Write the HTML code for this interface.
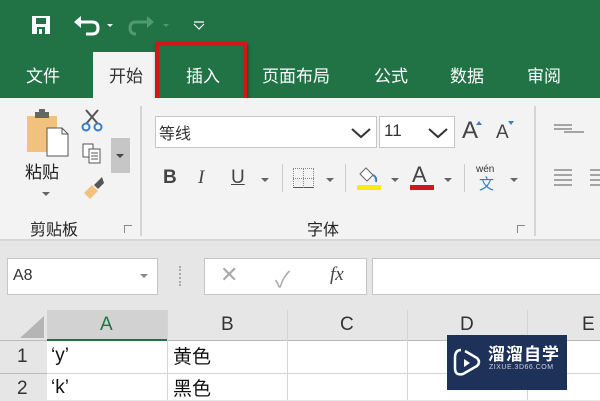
<!DOCTYPE html><html><head><meta charset="utf-8"><style>
*{margin:0;padding:0;box-sizing:border-box}
body{width:600px;height:400px;overflow:hidden;position:relative;background:#e6e6e6;font-family:"Liberation Sans","Noto Sans CJK SC",sans-serif}
.a{position:absolute}
.tab{position:absolute;top:62px;color:#fff;font-size:17px}
.cjk{font-family:"Noto Sans CJK SC",sans-serif}
.dd{position:absolute;width:0;height:0;border-left:4px solid transparent;border-right:4px solid transparent;border-top:4px solid #666}
</style></head><body>
<div class="a" style="left:0;top:0;width:600px;height:98px;background:#217346"></div>
<!-- QAT -->
<svg class="a" style="left:30px;top:14px" width="180" height="24" viewBox="0 0 180 24">
<rect x="2" y="2" width="18" height="18" fill="#fff"/><rect x="6" y="4" width="10" height="6" fill="#217346"/><rect x="7" y="13" width="8" height="7" fill="#217346"/><rect x="9" y="15" width="3" height="5" fill="#fff"/>
<path d="M50 8 L62 8 Q68 8 68 14 Q68 20 62 20 L56 20" stroke="#fff" stroke-width="3" fill="none"/><path d="M44 8 L51 2 L51 14Z" fill="#fff"/>
<path d="M77 10 l3 3 l3 -3z" fill="#fff"/>
<path d="M118 8 L106 8 Q100 8 100 14 Q100 20 106 20" stroke="#4f9a6e" stroke-width="3" fill="none"/><path d="M124 8 L117 2 L117 14Z" fill="#4f9a6e"/>
<path d="M133 10 l3 3 l3 -3z" fill="#4f9a6e"/>
<path d="M164 8 h10 M164 10 l5 5 l5 -5" stroke="#fff" stroke-width="1.2" fill="none"/>
</svg>
<div class="a" style="left:93px;top:52px;width:62px;height:46px;background:#f3f3f3"></div>
<div class="tab cjk" style="left:26px">文件</div>
<div class="tab cjk" style="left:109px;color:#333">开始</div>
<div class="tab cjk" style="left:186px">插入</div>
<div class="tab cjk" style="left:262px">页面布局</div>
<div class="tab cjk" style="left:374px">公式</div>
<div class="tab cjk" style="left:450px">数据</div>
<div class="tab cjk" style="left:527px">审阅</div>
<div class="a" style="left:155px;top:42px;width:92px;height:61px;border:4px solid #d0181a;box-shadow:1px 2px 4px rgba(0,0,0,.4)"></div>
<!-- ribbon -->
<div class="a" style="left:0;top:98px;width:600px;height:143px;background:#f3f3f3;border-bottom:2px solid #d6d6d6"></div>
<div class="a" style="left:140px;top:106px;width:2px;height:130px;background:#d4d4d4"></div>
<div class="a" style="left:534px;top:106px;width:2px;height:130px;background:#d4d4d4"></div>
<!-- paste -->
<svg class="a" style="left:25px;top:108px" width="45" height="50"><rect x="2" y="8" width="30" height="36" fill="#f1c27d"/><rect x="10" y="4" width="14" height="6" fill="#666"/><rect x="14" y="1" width="6" height="4" fill="#666"/><path d="M22 20 h15 l6 6 v22 h-21z" fill="#fff" stroke="#555"/><path d="M37 20 v6 h6" fill="none" stroke="#555"/></svg>
<div class="a cjk" style="left:25px;top:158px;font-size:17px;color:#222">粘贴</div>
<div class="dd" style="left:42px;top:192px"></div>
<svg class="a" style="left:80px;top:108px" width="26" height="24"><path d="M6 2 L18 16 M18 2 L6 16" stroke="#555" stroke-width="2"/><circle cx="6" cy="19" r="3.5" fill="none" stroke="#3a7ec4" stroke-width="2"/><circle cx="18" cy="19" r="3.5" fill="none" stroke="#3a7ec4" stroke-width="2"/></svg>
<svg class="a" style="left:82px;top:143px" width="22" height="22"><rect x="1" y="1" width="10" height="13" fill="#fff" stroke="#555"/><rect x="7" y="6" width="11" height="14" fill="#fff" stroke="#555"/><path d="M9 10h7M9 13h7M9 16h7" stroke="#555"/></svg>
<div class="a" style="left:111px;top:138px;width:19px;height:35px;background:#c6c6c6"></div>
<div class="dd" style="left:116px;top:154px;border-top-color:#444"></div>
<svg class="a" style="left:82px;top:177px" width="24" height="24"><path d="M2 16 L10 8 L16 14 L8 22Z" fill="#f1c27d"/><path d="M12 8 L20 0 L22 6 L16 12Z" fill="#555"/></svg>
<div class="a cjk" style="left:30px;top:216px;font-size:16px;color:#222">剪贴板</div>
<div class="a" style="left:124px;top:225px;width:8px;height:8px;border:1px solid #888;border-right:none;border-bottom:none"></div>
<!-- font -->
<div class="a" style="left:155px;top:116px;width:222px;height:32px;background:#fff;border:1px solid #c6c6c6"></div>
<div class="a cjk" style="left:159px;top:120px;font-size:16px;color:#333">等线</div>
<svg class="a" style="left:350px;top:126px" width="24" height="14"><path d="M2 3 L11 11 L20 3" stroke="#333" stroke-width="2" fill="none"/></svg>
<div class="a" style="left:379px;top:116px;width:76px;height:32px;background:#fff;border:1px solid #c6c6c6"></div>
<div class="a" style="left:384px;top:121px;font-size:17px;color:#333">11</div>
<svg class="a" style="left:427px;top:126px" width="24" height="14"><path d="M2 3 L11 11 L20 3" stroke="#333" stroke-width="2" fill="none"/></svg>
<div class="a" style="left:462px;top:117px;font-size:24px;color:#444">A</div>
<div class="a" style="left:496px;top:122px;font-size:19px;color:#444">A</div>
<div class="a" style="left:476px;top:121px;border-left:3px solid transparent;border-right:3px solid transparent;border-bottom:4px solid #3a7ec4"></div>
<div class="a" style="left:508px;top:121px;border-left:3px solid transparent;border-right:3px solid transparent;border-top:4px solid #3a7ec4"></div>
<div class="a" style="left:163px;top:167px;font-size:19px;font-weight:bold;color:#444">B</div>
<div class="a" style="left:198px;top:167px;font-size:19px;font-style:italic;font-family:'Liberation Serif',serif;color:#444">I</div>
<div class="a" style="left:231px;top:167px;font-size:19px;color:#444;text-decoration:underline">U</div>
<div class="dd" style="left:261px;top:178px"></div>
<div class="a" style="left:282px;top:164px;width:1px;height:28px;background:#ccc"></div>
<div class="a" style="left:293px;top:168px;width:21px;height:20px;border:1px dotted #888;border-bottom:1px solid #555"></div>
<div class="a" style="left:303px;top:168px;width:1px;height:20px;border-left:1px dotted #888"></div>
<div class="a" style="left:293px;top:178px;width:21px;border-top:1px dotted #888"></div>
<div class="dd" style="left:326px;top:178px"></div>
<div class="a" style="left:345px;top:164px;width:1px;height:28px;background:#ccc"></div>
<svg class="a" style="left:356px;top:164px" width="26" height="28"><path d="M4 10 L10 4 L17 11 L11 17Z" fill="#fff" stroke="#666"/><path d="M17 11 q4 2 3 7" stroke="#3a7ec4" stroke-width="2" fill="none"/><rect x="1" y="21" width="24" height="5" fill="#f5ec16"/></svg>
<div class="dd" style="left:391px;top:178px"></div>
<div class="a" style="left:412px;top:162px;font-size:22px;color:#444">A</div>
<div class="a" style="left:410px;top:185px;width:24px;height:5px;background:#d0181a"></div>
<div class="dd" style="left:444px;top:178px"></div>
<div class="a" style="left:464px;top:164px;width:1px;height:28px;background:#ccc"></div>
<div class="a" style="left:476px;top:164px;font-size:10px;color:#333">wén</div>
<div class="a cjk" style="left:479px;top:173px;font-size:15px;color:#3a7ec4">文</div>
<div class="dd" style="left:510px;top:178px"></div>
<div class="a cjk" style="left:307px;top:216px;font-size:16px;color:#222">字体</div>
<div class="a" style="left:517px;top:225px;width:8px;height:8px;border:1px solid #888;border-right:none;border-bottom:none"></div>
<svg class="a" style="left:550px;top:115px" width="50" height="80"><path d="M4 10h18M4 14h18M14 17h20 M4 55h18M4 60h18M4 65h18M4 70h18 M40 55h10M40 60h10M40 65h10M40 70h10" stroke="#555"/></svg>
<!-- formula bar -->
<div class="a" style="left:7px;top:258px;width:151px;height:37px;background:#fff;border:1px solid #c6c6c6"></div>
<div class="a" style="left:13px;top:267px;font-size:16px;color:#333">A8</div>
<div class="dd" style="left:140px;top:274px;border-top-color:#888"></div>
<div class="a" style="left:179px;top:266px;width:2px;height:20px;border-left:2px dotted #aaa"></div>
<div class="a" style="left:204px;top:258px;width:163px;height:37px;background:#fff;border:1px solid #c6c6c6"></div>
<div class="a" style="left:220px;top:262px;font-size:22px;color:#aaa">✕</div>
<div class="a" style="left:275px;top:262px;font-size:22px;color:#aaa">✓</div>
<div class="a" style="left:330px;top:264px;font-size:19px;font-style:italic;font-family:'Liberation Serif',serif;color:#444">fx</div>
<div class="a" style="left:372px;top:258px;width:230px;height:37px;background:#fff;border:1px solid #c6c6c6"></div>
<!-- grid -->
<div class="a" style="left:0;top:310px;width:600px;height:31px;background:#e6e6e6;border-bottom:1px solid #bbb"></div>
<div class="a" style="left:47px;top:310px;width:121px;height:31px;background:#d2d2d2;border-bottom:2px solid #217346"></div>
<svg class="a" style="left:18px;top:314px" width="28" height="26"><path d="M26 2 L26 24 L2 24Z" fill="#b5b5b5"/></svg>
<div class="a" style="left:0;top:341px;width:47px;height:59px;background:#e6e6e6"></div>
<div class="a" style="left:47px;top:341px;width:553px;height:59px;background:#fff"></div>
<div class="a" style="left:47px;top:373px;width:553px;height:1px;background:#d4d4d4"></div>
<div class="a" style="left:0;top:373px;width:47px;height:1px;background:#bbb"></div>
<div class="a" style="left:167px;top:310px;width:1px;height:90px;background:#d4d4d4"></div>
<div class="a" style="left:287px;top:310px;width:1px;height:90px;background:#d4d4d4"></div>
<div class="a" style="left:407px;top:310px;width:1px;height:90px;background:#d4d4d4"></div>
<div class="a" style="left:527px;top:310px;width:1px;height:90px;background:#d4d4d4"></div>
<div class="a" style="left:100px;top:314px;font-size:19px;color:#217346">A</div>
<div class="a" style="left:221px;top:314px;font-size:19px;color:#333">B</div>
<div class="a" style="left:340px;top:314px;font-size:19px;color:#333">C</div>
<div class="a" style="left:460px;top:314px;font-size:19px;color:#333">D</div>
<div class="a" style="left:582px;top:314px;font-size:19px;color:#333">E</div>
<div class="a" style="left:17px;top:346px;font-size:19px;color:#333">1</div>
<div class="a" style="left:17px;top:378px;font-size:19px;color:#333">2</div>
<div class="a" style="left:51px;top:345px;font-size:19px;color:#111">‘y’</div>
<div class="a" style="left:51px;top:377px;font-size:19px;color:#111">‘k’</div>
<div class="a cjk" style="left:173px;top:342px;font-size:19px;color:#111">黄色</div>
<div class="a cjk" style="left:173px;top:374px;font-size:19px;color:#111">黑色</div>
<!-- watermark -->
<div class="a" style="left:447px;top:335px;width:120px;height:55px;background:#1e3259"></div>
<svg class="a" style="left:453px;top:346px" width="30" height="32"><path d="M8 4 Q2 4 2 12 V22 Q2 30 10 28 L24 20 Q28 16 24 12 L12 5" stroke="#fff" stroke-width="2.5" fill="none"/><path d="M11 13 v8 l6 -4z" fill="#fff"/></svg>
<div class="a cjk" style="left:488px;top:340px;font-size:17px;font-weight:bold;color:#fff;letter-spacing:1px">溜溜自学</div>
<div class="a" style="left:489px;top:364px;font-size:7px;color:#ccd;letter-spacing:.5px">ZIXUE.3D66.COM</div>
</body></html>
